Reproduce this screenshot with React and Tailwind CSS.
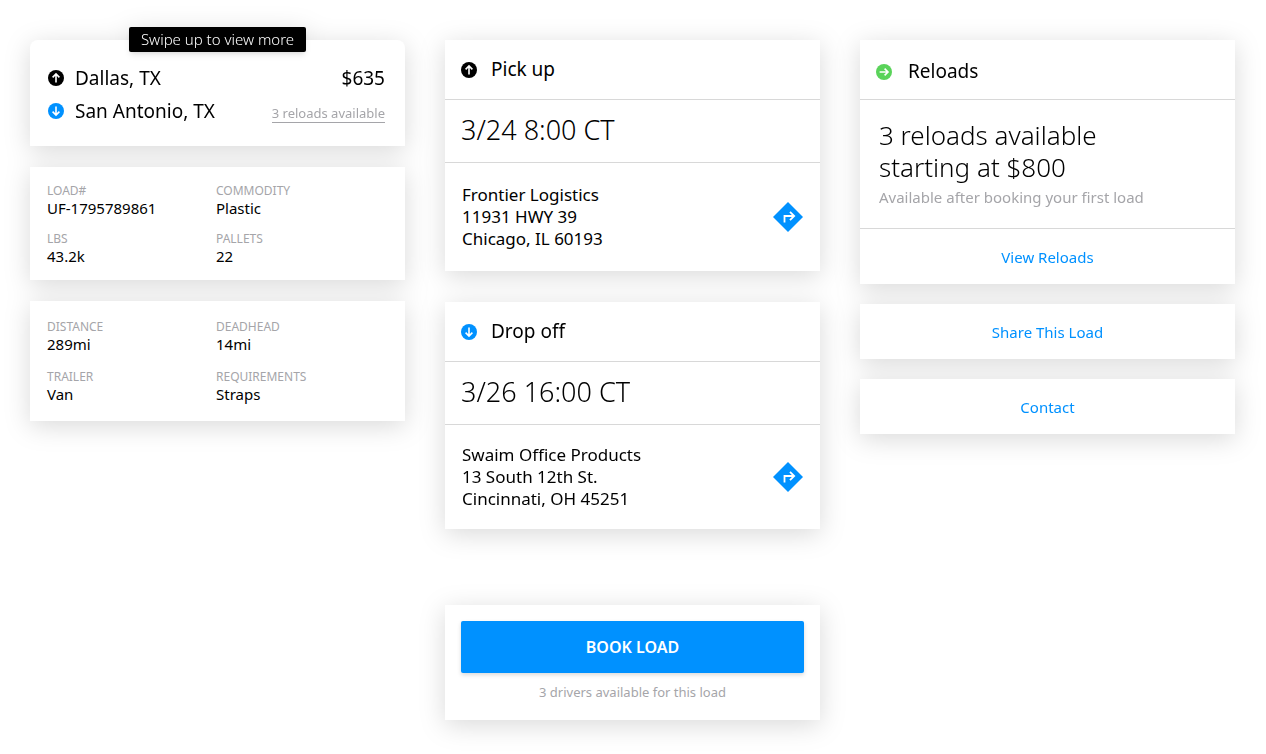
import clsx from "clsx";

const loadDetails = [
  { label: "LOAD#", value: "UF-1795789861" },
  { label: "COMMODITY", value: "Plastic" },
  { label: "LBS", value: "43.2k" },
  { label: "PALLETS", value: "22" },
];

const tripDetails = [
  { label: "DISTANCE", value: "289mi" },
  { label: "DEADHEAD", value: "14mi" },
  { label: "TRAILER", value: "Van" },
  { label: "REQUIREMENTS", value: "Straps" },
];

const arrows = {
  up: "M8 12.4V4M4.6 7.4L8 4l3.4 3.4",
  down: "M8 3.6V12M4.6 8.6L8 12l3.4-3.4",
  right: "M3.6 8H12M8.6 4.6L12 8l-3.4 3.4",
};

function ArrowIcon({ direction, className }) {
  return (
    <svg viewBox="0 0 16 16" className={clsx("size-4 shrink-0", className)} aria-hidden="true">
      <circle cx="8" cy="8" r="8" fill="currentColor" />
      <path d={arrows[direction]} fill="none" stroke="white" strokeWidth="1.6" />
    </svg>
  );
}

function DirectionsIcon() {
  return (
    <svg viewBox="0 0 30 30" className="size-[30px]" aria-hidden="true">
      <path d="M15 0l15 15-15 15L0 15z" fill="#0091ff" />
      <path d="M11.5 20.5V14H21M17 9.8l4.2 4.2-4.2 4.2" fill="none" stroke="white" strokeWidth="1.8" />
    </svg>
  );
}

function Card({ className, children }) {
  return <section className={clsx("bg-white", className)}>{children}</section>;
}

function CardHeader({ direction, color, title, className }) {
  return (
    <div className={clsx("flex h-15 items-center border-b border-[#d8d8d8] px-4", className)}>
      <ArrowIcon direction={direction} className={color} />
      <h2 className="text-[19px]">{title}</h2>
    </div>
  );
}

function Details({ items, className }) {
  return (
    <dl className={clsx("grid grid-cols-2 pr-5 pl-[17px]", className)}>
      {items.map((item) => (
        <div key={item.label}>
          <dt className="text-xs leading-4 text-[#a5a5a9]">{item.label}</dt>
          <dd className="text-[15px] leading-[18px]">{item.value}</dd>
        </div>
      ))}
    </dl>
  );
}

function Stop({ direction, color, title, time, address, className }) {
  return (
    <Card>
      <CardHeader direction={direction} color={color} title={title} className="gap-3.5" />
      <p className="border-b border-[#d8d8d8] px-4 pt-3.5 pb-4 text-[27px] leading-8 font-light">{time}</p>
      <div className={clsx("flex items-center justify-between px-[17px]", className)}>
        <address className="text-[17px] leading-[22px] not-italic">
          {address.map((line) => (
            <div key={line}>{line}</div>
          ))}
        </address>
        <button type="button" aria-label={`Directions to ${address[0]}`}>
          <DirectionsIcon />
        </button>
      </div>
    </Card>
  );
}

function CardButton({ children }) {
  return (
    <button type="button" className="h-[55px] w-full pt-0.5 text-[15px] text-[#0091ff]">
      {children}
    </button>
  );
}

export default function App() {
  return (
    <main className="min-h-screen bg-white pt-10 pr-[31px] pb-8 pl-[30px] font-['Noto_Sans',sans-serif] text-black">
      <div className="grid grid-cols-3 items-start gap-10">
        {/* Load summary */}
        <div className="flex flex-col gap-[21px] drop-shadow-[0_5px_13px_rgba(0,0,0,0.15)]">
          <Card className="relative rounded-t-lg pt-[22px] pr-5 pb-[18px] pl-[18px]">
            <div className="absolute inset-x-0 -top-[13px] flex justify-center">
              <p className="rounded-xs bg-black px-3 text-[15px] leading-[25px] font-light text-white shadow-md">
                Swipe up to view more
              </p>
            </div>
            <div className="flex h-8 items-center gap-[11px] text-[19px]">
              <ArrowIcon direction="up" className="text-black" />
              <span>Dallas, TX</span>
              <span className="ml-auto">$635</span>
            </div>
            <div className="flex h-[34px] items-center gap-[11px] text-[19px]">
              <ArrowIcon direction="down" className="text-[#0091ff]" />
              <span>San Antonio, TX</span>
              <a
                href="#reloads"
                className="mb-[5px] ml-auto self-end border-b border-[#a5a5a9] text-[13px] leading-[18px] text-[#a5a5a9]"
              >
                3 reloads available
              </a>
            </div>
          </Card>
          <Card>
            <Details items={loadDetails} className="gap-y-3.5 pt-4 pb-[15px]" />
          </Card>
          <Card>
            <Details items={tripDetails} className="gap-y-4 pt-[18px] pb-[18px]" />
          </Card>
        </div>

        {/* Stops */}
        <div className="flex flex-col drop-shadow-[0_5px_13px_rgba(0,0,0,0.15)]">
          <div className="flex flex-col gap-[31px]">
            <Stop
              direction="up"
              color="text-black"
              title="Pick up"
              time="3/24 8:00 CT"
              address={["Frontier Logistics", "11931 HWY 39", "Chicago, IL 60193"]}
              className="py-[21px]"
            />
            <Stop
              direction="down"
              color="text-[#0091ff]"
              title="Drop off"
              time="3/26 16:00 CT"
              address={["Swaim Office Products", "13 South 12th St.", "Cincinnati, OH 45251"]}
              className="py-[19px]"
            />
          </div>
          <Card className="mt-19 px-4 pt-4 pb-[19px] text-center">
            <button
              type="button"
              className="h-[52px] w-full rounded-xs bg-[#0091ff] text-base font-semibold text-white shadow-[0_2px_4px_rgba(0,0,0,0.15)]"
            >
              BOOK LOAD
            </button>
            <p className="mt-2.5 text-[13px] leading-[18px] text-[#a5a5a9]">3 drivers available for this load</p>
          </Card>
        </div>

        {/* Reloads */}
        <div id="reloads" className="flex flex-col gap-5 drop-shadow-[0_5px_13px_rgba(0,0,0,0.15)]">
          <Card>
            <CardHeader direction="right" color="text-[#5ad35a]" title="Reloads" className="gap-4 pt-1" />
            <div className="border-b border-[#d8d8d8] px-[19px] py-[19px]">
              <p className="text-[26px] leading-8 font-light">
                3 reloads available
                <br />
                starting at $800
              </p>
              <p className="mt-0.5 text-[15px] leading-6 text-[#a5a5a9]">Available after booking your first load</p>
            </div>
            <CardButton>View Reloads</CardButton>
          </Card>
          <Card>
            <CardButton>Share This Load</CardButton>
          </Card>
          <Card>
            <CardButton>Contact</CardButton>
          </Card>
        </div>
      </div>
    </main>
  );
}
